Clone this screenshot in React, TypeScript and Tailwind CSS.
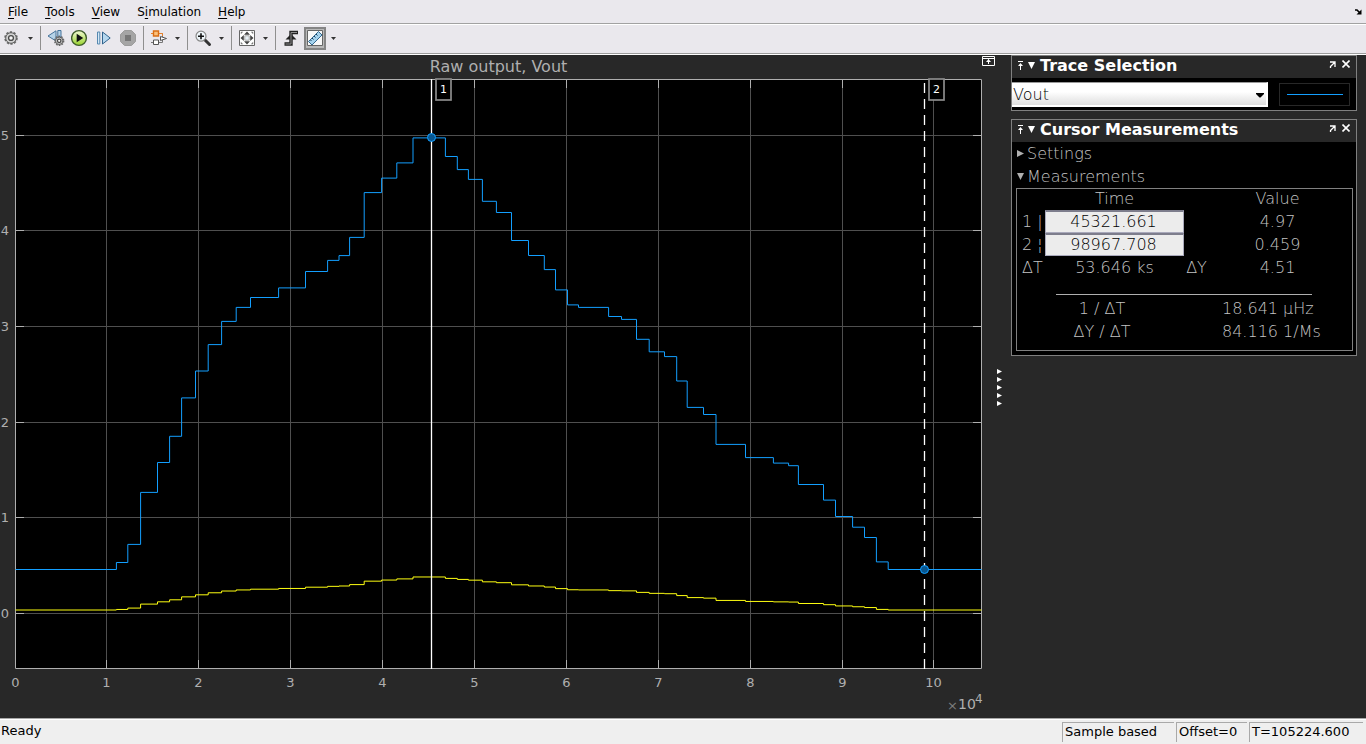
import React from 'react';

type Point = [x: number, y: number];

const X_LEFT = 15.5;
const X_RIGHT = 981.5;
const Y_TOP = 79.5;
const Y_BOTTOM = 668.5;

const X_TICKS = [15.5, 106.5, 198.5, 290.5, 382.5, 474.5, 566.5, 658.5, 750.5, 842.5, 933.5];
const Y_TICKS = [
  { label: '5', y: 135.5 },
  { label: '4', y: 230.5 },
  { label: '3', y: 326.5 },
  { label: '2', y: 422.5 },
  { label: '1', y: 517.5 },
  { label: '0', y: 613.5 },
];

// Each entry is the x position of a step and the level held after it.
const VOUT: Point[] = [
  [15.5, 569.5], [116.4, 562.5], [127.8, 544.4], [140.6, 492.4], [157.5, 462.5],
  [169.6, 436.3], [181.6, 397.9], [195.5, 371], [208.2, 344.6], [221.6, 321.4],
  [236.2, 307.4], [250.5, 297.5], [278.6, 287.9], [305.5, 271.5], [327.6, 260.4],
  [339, 255.6], [349.6, 237.4], [364.2, 192.6], [381.6, 178.1], [396.8, 162.9],
  [413, 137.9], [445.4, 156.5], [457.3, 169.6], [468.4, 179.4], [482.4, 201.3],
  [496.4, 212.5], [511.5, 240.5], [528.5, 255.5], [544.3, 269.6], [555.5, 289.9],
  [567.5, 304.9], [578.5, 307.4], [608.6, 316.5], [621.5, 319.4], [636.5, 339.3],
  [649.2, 351.8], [664.5, 356.6], [676.7, 381], [687.2, 407.4], [703.5, 414.5],
  [716, 444.4], [745.5, 457.6], [773.4, 463.1], [788.6, 465.7], [798.4, 484.5],
  [823.5, 500.1], [835.5, 516.5], [852.6, 527.2], [864.5, 537.5], [876.4, 561.9],
  [888.2, 569.5],
];

const RAW: Point[] = VOUT.map(([x, y]) => [x, 610 - (569.5 - y) * 0.0765]);

function stepPath(points: Point[]): string {
  const [first, ...rest] = points;
  return `M${first[0]} ${first[1]}` + rest.map(([x, y]) => `H${x}V${y}`).join('') + `H${X_RIGHT}`;
}

function CursorLabel({ x, text }: { x: number; text: string }) {
  return (
    <g>
      <rect x={x} y="79" width="15" height="21" fill="#000" stroke="#8c8c8c" strokeWidth="1.7" />
      <text x={x + 7.5} y="93" textAnchor="middle" fontSize="11" fill="#fff">{text}</text>
    </g>
  );
}

function Chart() {
  return (
    <svg
      viewBox="0 55 995 663"
      className="block h-auto w-full font-['DejaVu_Sans',sans-serif]"
      role="img"
      aria-label="Raw output, Vout"
    >
      <rect x="15" y="79" width="967" height="590" fill="#000" />
      <g stroke="#4f4f4f" strokeWidth="1">
        {X_TICKS.slice(1).map((x) => <path key={x} d={`M${x} ${Y_TOP}V${Y_BOTTOM}`} />)}
        {Y_TICKS.map(({ y }) => <path key={y} d={`M${X_LEFT} ${y}H${X_RIGHT}`} />)}
      </g>
      <g stroke="#afafaf" strokeWidth="1" fill="none">
        {X_TICKS.slice(1).map((x) => <path key={x} d={`M${x} 79V88M${x} 669V660`} />)}
        {Y_TICKS.map(({ y }) => <path key={y} d={`M15 ${y}H24M982 ${y}H973`} />)}
        <path d={`M${X_LEFT} ${Y_TOP}H${X_RIGHT}V${Y_BOTTOM}H${X_LEFT}Z`} />
      </g>
      <path d={stepPath(RAW)} fill="none" stroke="#ffff11" strokeWidth="1" />
      <path d={stepPath(VOUT)} fill="none" stroke="#139fff" strokeWidth="1" />
      <path d="M431.5 79V669" stroke="#fff" strokeWidth="1.3" />
      <path d="M924.5 83V669" stroke="#fff" strokeWidth="1.3" strokeDasharray="10 6" />
      <g fill="#08568f" stroke="#139fff" strokeWidth="1">
        <circle cx="431.5" cy="137.5" r="4" />
        <circle cx="924.5" cy="569.5" r="4" />
      </g>
      <CursorLabel x={436} text="1" />
      <CursorLabel x={929} text="2" />
      <g fill="#afafaf" fontSize="13">
        <text x="498.5" y="72" textAnchor="middle" fontSize="16">Raw output, Vout</text>
        {X_TICKS.map((x, i) => (
          <text key={x} x={x} y="687" textAnchor="middle">{i}</text>
        ))}
        {Y_TICKS.map(({ label, y }) => (
          <text key={y} x="9" y={y + 4.5} textAnchor="end">{label}</text>
        ))}
        <text x="947" y="710" fill="#7c7c7c">×</text>
        <text x="958" y="709" fontSize="14">10</text>
        <text x="975" y="703" fontSize="12">4</text>
      </g>
    </svg>
  );
}

function Separator() {
  return <div className="mx-[3px] h-6 w-px bg-[#8f8f8f]" />;
}

function Caret({ label }: { label: string }) {
  return (
    <button type="button" aria-label={label} className="flex h-6 w-[13px] items-center justify-center">
      <svg width="5" height="3" viewBox="0 0 5 3"><path d="M0 0H5L2.5 3Z" fill="#333" /></svg>
    </button>
  );
}

function Tool({ label, active = false, children }: { label: string; active?: boolean; children: React.ReactNode }) {
  return (
    <button
      type="button"
      aria-label={label}
      className={
        active
          ? 'mx-px flex h-[23px] w-[22px] items-center justify-center border-2 border-[#858585] bg-[#b9b9b9]'
          : 'flex h-6 w-6 items-center justify-center'
      }
    >
      <svg width="18" height="18" viewBox="0 0 18 18" fill="none">{children}</svg>
    </button>
  );
}

function Gear({ cx, cy, r }: { cx: number; cy: number; r: number }) {
  const tooth = (2 * Math.PI * r) / 20;
  return (
    <g>
      <circle cx={cx} cy={cy} r={r} stroke="#6a6a6a" strokeWidth="2" strokeDasharray={`${tooth * 1.2} ${tooth * 0.8}`} />
      <circle cx={cx} cy={cy} r={r - 0.5} fill="#d2d2d2" stroke="#5c5c5c" strokeWidth="1" />
      <circle cx={cx} cy={cy} r={r * 0.42} fill="#f4f4f4" stroke="#4a4a4a" strokeWidth="1.3" />
    </g>
  );
}

function Toolbar() {
  return (
    <div role="toolbar" className="flex h-[30px] items-center border-b border-white bg-[#eae8ed] pb-[3px] shadow-[inset_0_-1px_0_#9c9c9c]">
      <Tool label="Configuration properties"><Gear cx={8} cy={9} r={5.8} /></Tool>
      <Caret label="Configuration options" />
      <Separator />
      <Tool label="Stepping options">
        <path d="M9 1.8V12L1 7Z" fill="#b7d3e8" stroke="#45739b" />
        <path d="M10.8 1.5H14V8H10.8Z" fill="#b7d3e8" stroke="#45739b" />
        <Gear cx={12.2} cy={11.8} r={4.2} />
      </Tool>
      <Tool label="Run">
        <defs>
          <linearGradient id="run" x1="0" y1="0" x2="0" y2="1">
            <stop offset="0" stopColor="#f4fbd6" />
            <stop offset="1" stopColor="#97d32c" />
          </linearGradient>
        </defs>
        <circle cx="8" cy="9" r="7.4" fill="url(#run)" stroke="#3f5d2b" strokeWidth="1.4" />
        <path d="M5.7 4.8V13.2L12.2 9Z" fill="#111" />
      </Tool>
      <Tool label="Step forward">
        <path d="M2.5 3H4.8V15H2.5Z" fill="#d4e7f5" stroke="#5588b0" />
        <path d="M7.5 3V15L15.2 9Z" fill="#b5d7ee" stroke="#32648e" />
      </Tool>
      <Tool label="Stop">
        <path d="M5.5 1.5H12.5L16.5 5.5V12.5L12.5 16.5H5.5L1.5 12.5V5.5Z" fill="#a5a5a5" stroke="#9c9c9c" />
        <path d="M6 6H12V12H6Z" fill="#777" />
      </Tool>
      <Separator />
      <Tool label="Highlight block">
        <path d="M1 4.5H12.5V9M1 13.5H12.5V9" stroke="#777" />
        <path d="M1 4.5H12.5V7" stroke="#e9822a" />
        <path d="M3.5 2H8.5V7H3.5Z" fill="#fbc07a" stroke="#d96d14" strokeWidth="1.4" />
        <path d="M3.5 11H8.5V15.5H3.5Z" fill="#fff" stroke="#555" />
        <path d="M10.5 7.5L16.5 9.5L10.5 11.5Z" fill="#fff" stroke="#555" />
      </Tool>
      <Caret label="Highlight options" />
      <Separator />
      <Tool label="Zoom">
        <path d="M11 11L15.5 15.5" stroke="#333" strokeWidth="3" strokeLinecap="round" />
        <circle cx="7" cy="7.2" r="5" fill="#eef5fa" stroke="#888" strokeWidth="1.2" />
        <path d="M4 7.2H10M7 4.2V10.2" stroke="#111" strokeWidth="1.6" />
      </Tool>
      <Caret label="Zoom options" />
      <Separator />
      <Tool label="Scale axes">
        <path d="M1.5 1.5H16.5V16.5H1.5Z" fill="#fff" stroke="#666" />
        <path d="M9 2.5L12 5.8H6ZM9 15.5L12 12.2H6ZM2.5 9L5.8 6V12ZM15.5 9L12.2 6V12Z" fill="#444" />
        <path d="M2.8 2.8H5.2L2.8 5.2ZM15.2 2.8V5.2L12.8 2.8ZM2.8 15.2V12.8L5.2 15.2ZM15.2 15.2H12.8L15.2 12.8Z" fill="#777" />
        <path d="M6.8 6.8H11.2V11.2H6.8Z" fill="#eaf2f8" stroke="#aaa" />
      </Tool>
      <Caret label="Scale options" />
      <Separator />
      <Tool label="Triggers">
        <path d="M2.5 15H9V3.5H16" stroke="#222" strokeWidth="3.4" />
        <path d="M3.5 10.5L9 5L14.5 10.5Z" fill="#222" />
        <path d="M3.5 15H9V3.5H15" stroke="#8c8c8c" strokeWidth="1" />
      </Tool>
      <Tool label="Cursor measurements" active>
        <path d="M1.5 1.5H16.5V16.5H1.5Z" fill="#f8f8f8" stroke="#666" />
        <path d="M12.5 2.5L16 6L6 16L2.5 12.5Z" fill="#a5d3ee" stroke="#34688e" />
        <path d="M6 9L7.5 10.5M8 7L9.5 8.5M10 5L11.5 6.5M4.5 11L5.5 12" stroke="#173f5f" />
      </Tool>
      <Caret label="Measurement options" />
    </div>
  );
}

function PanelHeader({ title }: { title: string }) {
  return (
    <header className="flex h-[22px] items-center bg-[#282828] pr-1.5 pl-1 text-white">
      <button type="button" aria-label={`Collapse ${title}`} className="flex items-center gap-[3px] pb-1">
        <svg width="9" height="9" viewBox="0 0 9 9" fill="#fff">
          <path d="M2 0H7V1H2ZM4 3H5V9H4ZM4.5 2L7 5H2Z" />
        </svg>
        <svg width="7" height="7" viewBox="0 0 7 7"><path d="M0 0H7L3.5 7Z" fill="#fff" /></svg>
      </button>
      <h2 className="ml-[5px] flex-1 pb-0.5 text-base leading-5 font-bold">{title}</h2>
      <div className="flex items-center gap-1.5 pb-1.5">
        <button type="button" aria-label={`Undock ${title}`}>
          <svg width="7" height="7" viewBox="0 0 7 7" className="block">
            <path d="M1 1H6V6M6 1L1.5 5.5V7" fill="none" stroke="#fff" strokeWidth="1.3" />
          </svg>
        </button>
        <button type="button" aria-label={`Close ${title}`}>
          <svg width="8" height="8" viewBox="0 0 8 8" className="block">
            <path d="M0.5 0.5L7.5 7.5M7.5 0.5L0.5 7.5" stroke="#fff" strokeWidth="1.6" />
          </svg>
        </button>
      </div>
    </header>
  );
}

function TraceSelection() {
  return (
    <section className="border border-[#808080] bg-black">
      <PanelHeader title="Trace Selection" />
      <div className="flex h-8 items-center gap-[11px] pr-1.5">
        <div className="relative flex-1">
          <select
            aria-label="Trace"
            defaultValue="Vout"
            className="block h-[25px] w-full appearance-none border-t border-r-2 border-b-2 border-t-[#9a9a9a] border-r-white border-b-white bg-linear-to-b from-white from-40% to-[#dedede] pt-0.5 pl-px text-base leading-5 font-extralight text-black"
          >
            <option>Vout</option>
          </select>
          <svg width="8" height="5" viewBox="0 0 8 5" className="pointer-events-none absolute top-[11px] right-1">
            <path d="M0 0H8V1L4.5 4.5H3.5L0 1Z" fill="#000" />
          </svg>
        </div>
        <div className="flex h-[23px] w-[71px] items-center justify-center border border-[#282828]">
          <div className="h-px w-14 bg-[#139fff]" />
        </div>
      </div>
    </section>
  );
}

function Disclosure({ label, open }: { label: string; open: boolean }) {
  return (
    <button type="button" aria-expanded={open} className="flex h-[23px] w-full items-center gap-[3px] pl-[5px] text-left">
      <svg width="7" height="7" viewBox="0 0 7 7" fill="#afafaf">
        {open ? <path d="M0 0H7L3.5 7Z" /> : <path d="M0 0V7L7 3.5Z" />}
      </svg>
      {label}
    </button>
  );
}

function TimeInput({ label, value }: { label: string; value: string }) {
  return (
    <input
      aria-label={label}
      defaultValue={value}
      className="block h-[23px] w-full border border-t-2 border-[#a9a9bb] border-t-[#7d7d8c] bg-[#ececec] pr-0.5 pb-0.5 text-center leading-5 text-black"
    />
  );
}

function CursorMeasurements() {
  return (
    <section className="border border-[#808080] bg-black pb-1 text-base font-extralight text-[#c4c4c4]">
      <PanelHeader title="Cursor Measurements" />
      <Disclosure label="Settings" open={false} />
      <Disclosure label="Measurements" open />
      <div className="mr-[3px] ml-1 border border-[#808080] pb-[7px]">
        <table className="w-full table-fixed border-collapse text-center leading-5">
          <colgroup>
            <col className="w-7" />
            <col className="w-[139px]" />
            <col className="w-[25px]" />
            <col />
          </colgroup>
          <thead>
            <tr className="h-[21px]">
              <td />
              <th scope="col" className="p-0 pb-0.5 leading-[19px] font-extralight">Time</th>
              <td />
              <th scope="col" className="p-0 pr-1.5 pb-0.5 leading-[19px] font-extralight">Value</th>
            </tr>
          </thead>
          <tbody>
            <tr className="h-[23px]">
              <th scope="row" className="p-0 pl-[5px] text-left font-extralight whitespace-nowrap">1 |</th>
              <td className="p-0"><TimeInput label="Cursor 1 time" value="45321.661" /></td>
              <td />
              <td className="p-0 pr-1.5">4.97</td>
            </tr>
            <tr className="h-[23px]">
              <th scope="row" className="p-0 pl-[5px] text-left font-extralight whitespace-nowrap">2 ¦</th>
              <td className="p-0"><TimeInput label="Cursor 2 time" value="98967.708" /></td>
              <td />
              <td className="p-0 pr-1.5">0.459</td>
            </tr>
            <tr className="h-[23px]">
              <th scope="row" className="p-0 pl-[5px] text-left font-extralight">ΔT</th>
              <td className="p-0">53.646 ks</td>
              <th scope="row" className="p-0 font-extralight">ΔY</th>
              <td className="p-0 pr-1.5">4.51</td>
            </tr>
          </tbody>
        </table>
        <hr className="mt-[15px] mr-10 mb-0.5 ml-[39px] border-[#afafaf]" />
        <table className="ml-10 table-fixed border-collapse text-center leading-5">
          <tbody>
            <tr className="h-[23px]">
              <th scope="row" className="w-[90px] p-0 font-extralight">1 / ΔT</th>
              <td className="p-0 pl-[75px] text-left whitespace-nowrap">18.641 µHz</td>
            </tr>
            <tr className="h-[23px]">
              <th scope="row" className="p-0 font-extralight">ΔY / ΔT</th>
              <td className="p-0 pl-[75px] text-left whitespace-nowrap">84.116 1/Ms</td>
            </tr>
          </tbody>
        </table>
      </div>
    </section>
  );
}

const MENUS = [
  { before: '', key: 'F', after: 'ile' },
  { before: '', key: 'T', after: 'ools' },
  { before: '', key: 'V', after: 'iew' },
  { before: 'S', key: 'i', after: 'mulation' },
  { before: '', key: 'H', after: 'elp' },
];

export default function App() {
  return (
    <div className="flex min-h-screen flex-col bg-[#282828] font-['DejaVu_Sans',sans-serif] text-black">
      <nav className="flex h-6 items-center border-b border-[#a2a2a2] bg-[#eae8ed] pr-1 pl-2 text-[12px] leading-4">
        <div className="flex flex-1 gap-[17px]">
          {MENUS.map((m) => (
            <button key={m.key} type="button">
              {m.before}
              <span className="underline underline-offset-2">{m.key}</span>
              {m.after}
            </button>
          ))}
        </div>
        <button type="button" aria-label="Dock window">
          <svg width="8" height="6" viewBox="0 0 8 6">
            <path d="M1 1H3L6 4" fill="none" stroke="#000" strokeWidth="1.6" />
            <path d="M7.5 0.5V5.5H2.5Z" fill="#000" />
          </svg>
        </button>
      </nav>
      <div className="border-t border-white">
        <Toolbar />
      </div>
      <main className="flex flex-1">
        <div className="relative min-w-0 flex-1">
          <Chart />
          <button type="button" aria-label="Maximize axes" className="absolute top-px right-0">
            <svg width="13" height="10" viewBox="0 0 13 10" className="block" fill="none" stroke="#fff">
              <path d="M0.5 0.5H12.5V9.5H0.5ZM0.5 2.5H12.5M6.5 3.5V8" />
              <path d="M6.5 3L9 6H4Z" fill="#fff" stroke="none" />
            </svg>
          </button>
        </div>
        <button type="button" aria-label="Resize panels" className="flex w-4 flex-col items-start justify-center gap-[3px] pt-0.5 pl-0.5">
          {[0, 1, 2, 3, 4].map((i) => (
            <svg key={i} width="5" height="5" viewBox="0 0 5 5"><path d="M0 0V5L5 2.5Z" fill="#fff" /></svg>
          ))}
        </button>
        <aside className="mr-[9px] flex w-[346px] flex-col gap-2">
          <TraceSelection />
          <CursorMeasurements />
        </aside>
      </main>
      <footer className="flex h-[26px] items-center border-t border-[#a9a9a9] bg-[#efefef] pr-[3px] text-[13px] leading-4 shadow-[inset_0_1px_0_#fff]">
        <div className="flex-1 pb-0.5 pl-px">Ready</div>
        <div className="flex gap-0.5">
          <div className="h-5 w-28 border-t border-l border-[#a9a9a9] pt-px pl-0.5">Sample based</div>
          <div className="h-5 w-[71px] border-t border-l border-[#a9a9a9] pt-px pl-0.5">Offset=0</div>
          <div className="h-5 w-[114px] border-t border-l border-[#a9a9a9] pt-px pl-0.5">T=105224.600</div>
        </div>
      </footer>
    </div>
  );
}
